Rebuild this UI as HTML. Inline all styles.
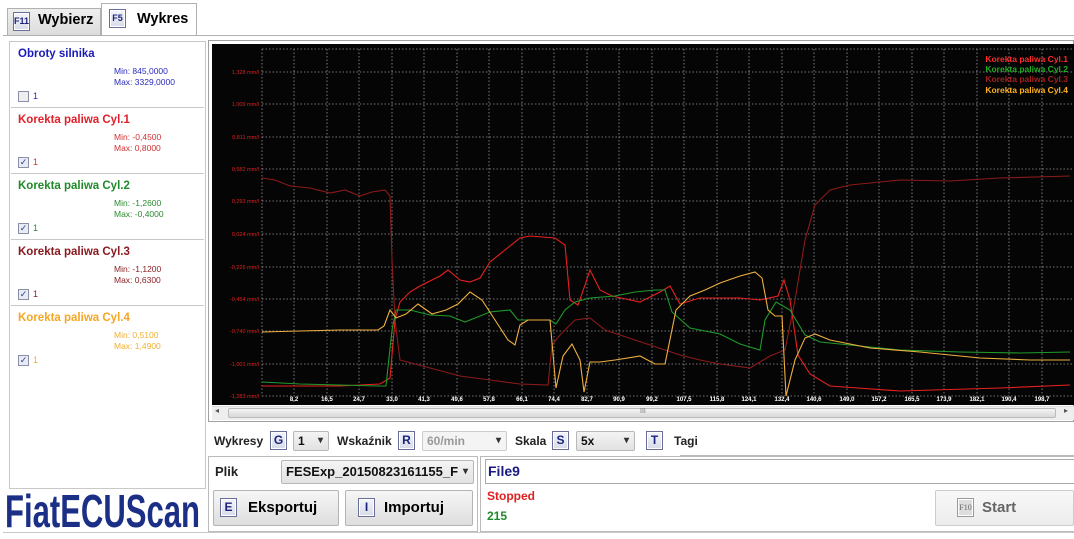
<!DOCTYPE html>
<html><head><meta charset="utf-8">
<style>
*{box-sizing:border-box;margin:0;padding:0}
body{width:1074px;height:539px;background:#fff;font-family:"Liberation Sans",sans-serif;position:relative;overflow:hidden}
.abs{position:absolute}
.key{position:absolute;width:17px;height:19px;border:1px solid #6a6f9a;background:linear-gradient(#f4f5fb,#d8dbe8);color:#1a237e;font-weight:bold;font-size:12px;text-align:center;line-height:17px;box-shadow:inset 0 0 0 1px #fff}
.item{position:absolute;left:11px;width:193px;height:66px;border-bottom:1px solid #c8c8c8;font-size:11px}
.item .t{position:absolute;left:7px;top:6px;font-weight:bold;font-size:11.5px}
.item .mn{position:absolute;left:103px;top:24px;font-size:8.5px;line-height:11px}
.item .cb{position:absolute;left:7px;top:49px;width:11px;height:11px;border:1px solid #8a8fa8;background:#e8ebf4;font-size:9px;line-height:9px;color:#2a3a8a;text-align:center}
.item .one{position:absolute;left:22px;top:49px;font-size:9px}
.lbl{font-weight:bold;font-size:12px;color:#222;position:absolute}
.btn{position:absolute;border:1px solid #b4b4b4;border-radius:2px;background:linear-gradient(#f6f6f6,#dedede);font-weight:bold;font-size:15px;color:#111}
.sel{position:absolute;border:1px solid #b8b8b8;border-radius:2px;background:linear-gradient(#f4f4f4,#e2e2e2);font-weight:bold;font-size:12px;color:#111;padding-left:4px;line-height:18px}
.sel:after{content:"▾";position:absolute;right:5px;top:0;font-size:10px;color:#333}
</style></head><body>
<div class="abs" style="left:7px;top:8px;width:94px;height:27px;background:linear-gradient(#efefef,#dcdcdc);border:1px solid #b0b0b0;border-bottom:none"></div>
<div class="key" style="left:13px;top:12px;font-size:9px">F11</div>
<div class="abs" style="left:38px;top:12px;font-weight:bold;font-size:14.5px">Wybierz</div>
<div class="abs" style="left:101px;top:3px;width:96px;height:33px;background:#fff;border:1px solid #b0b0b0;border-bottom:none"></div>
<div class="key" style="left:109px;top:9px;font-size:9px">F5</div>
<div class="abs" style="left:137px;top:11px;font-weight:bold;font-size:14.5px">Wykres</div>
<div class="abs" style="left:3px;top:35px;width:1071px;height:1px;background:#b0b0b0"></div>
<div class="abs" style="left:9px;top:41px;width:197px;height:448px;border:1px solid #c8c8c8"></div>
<div class="item" style="top:42px"><div class="t" style="color:#1a1ab8">Obroty silnika</div><div class="mn" style="color:#2a2ac0">Min: 845,0000<br>Max: 3329,0000</div><div class="cb" style="background:#eee"></div><div class="one" style="color:#2a2ac0">1</div></div>
<div class="item" style="top:108px"><div class="t" style="color:#e0202a">Korekta paliwa Cyl.1</div><div class="mn" style="color:#d03030">Min: -0,4500<br>Max: 0,8000</div><div class="cb">✓</div><div class="one" style="color:#d03030">1</div></div>
<div class="item" style="top:174px"><div class="t" style="color:#1f8a2a">Korekta paliwa Cyl.2</div><div class="mn" style="color:#2a8a30">Min: -1,2600<br>Max: -0,4000</div><div class="cb">✓</div><div class="one" style="color:#2a8a30">1</div></div>
<div class="item" style="top:240px"><div class="t" style="color:#8a1a20">Korekta paliwa Cyl.3</div><div class="mn" style="color:#8a2025">Min: -1,1200<br>Max: 0,6300</div><div class="cb">✓</div><div class="one" style="color:#8a2025">1</div></div>
<div class="item" style="top:306px;border-bottom:none"><div class="t" style="color:#f5a623">Korekta paliwa Cyl.4</div><div class="mn" style="color:#f0b030">Min: 0,5100<br>Max: 1,4900</div><div class="cb">✓</div><div class="one" style="color:#f0b030">1</div></div>
<svg class="abs" style="left:0;top:488px" width="208" height="44"><text x="5" y="39" textLength="195" lengthAdjust="spacingAndGlyphs" font-family="Liberation Sans" font-weight="bold" font-size="46" fill="#1c2f86">FiatECUScan</text></svg>
<div class="abs" style="left:3px;top:532px;width:1071px;height:1px;background:#c8c8c8"></div>
<div class="abs" style="left:208px;top:40px;width:866px;height:382px;border:1px solid #a0a0a0;background:#fff"></div>
<svg class="abs" style="left:212px;top:44px" width="862" height="361" viewBox="212 44 862 361">
<rect x="212" y="44" width="862" height="361" fill="#050505"/>
<g stroke="#999" stroke-width="0.8" stroke-dasharray="1.5,2" fill="none">
<path d="M262 49V396M294 49V396M327 49V396M359 49V396M392 49V396M424 49V396M457 49V396M489 49V396M522 49V396M554 49V396M587 49V396M619 49V396M652 49V396M684 49V396M717 49V396M749 49V396M782 49V396M814 49V396M847 49V396M879 49V396M912 49V396M944 49V396M977 49V396M1009 49V396M1042 49V396"/>
<path d="M262 49H1074M262 72H1074M262 104H1074M262 137H1074M262 169H1074M262 201H1074M262 234H1074M262 267H1074M262 299H1074M262 331H1074M262 364H1074M262 396H1074"/>
</g>
<g fill="#e02020" font-size="5.5" text-anchor="end" font-family="Liberation Sans">
<text x="259" y="74">1,328 mm/l</text><text x="259" y="106">1,009 mm/l</text><text x="259" y="139">0,811 mm/l</text><text x="259" y="171">0,582 mm/l</text><text x="259" y="203">0,293 mm/l</text><text x="259" y="236">0,024 mm/l</text><text x="259" y="269">-0,226 mm/l</text><text x="259" y="301">-0,454 mm/l</text><text x="259" y="333">-0,740 mm/l</text><text x="259" y="366">-1,001 mm/l</text><text x="259" y="398">-1,283 mm/l</text>
</g>
<g fill="#fff" font-size="6" font-weight="bold" text-anchor="middle" font-family="Liberation Sans">
<text x="294" y="401">8,2</text><text x="327" y="401">16,5</text><text x="359" y="401">24,7</text><text x="392" y="401">33,0</text><text x="424" y="401">41,3</text><text x="457" y="401">49,6</text><text x="489" y="401">57,8</text><text x="522" y="401">66,1</text><text x="554" y="401">74,4</text><text x="587" y="401">82,7</text><text x="619" y="401">90,9</text><text x="652" y="401">99,2</text><text x="684" y="401">107,5</text><text x="717" y="401">115,8</text><text x="749" y="401">124,1</text><text x="782" y="401">132,4</text><text x="814" y="401">140,6</text><text x="847" y="401">149,0</text><text x="879" y="401">157,2</text><text x="912" y="401">165,5</text><text x="944" y="401">173,9</text><text x="977" y="401">182,1</text><text x="1009" y="401">190,4</text><text x="1042" y="401">198,7</text>
</g>
<g fill="none" stroke-width="1.1">
<polyline stroke="#8b1a1a" points="262,178 275,180 290,186 310,188 330,193 345,190 360,196 372,192 385,190 390,196 392,260 395,320 400,360 430,368 460,376 490,380 520,384 548,385 552,345 560,335 575,320 590,318 605,330 620,335 650,345 680,355 700,360 720,364 750,368 770,356 785,350 795,300 805,240 815,205 830,190 850,185 900,180 950,181 1000,178 1070,176"/>
<polyline stroke="#e82020" points="262,386 300,386 340,386 380,384 390,378 395,320 400,302 410,292 420,286 440,276 448,270 460,280 470,282 480,278 490,262 505,250 520,238 530,236 555,238 565,245 570,300 578,305 585,285 590,270 600,290 612,296 640,302 660,292 670,286 680,304 700,298 740,298 760,300 778,296 784,280 790,300 798,355 810,374 830,386 900,391 1000,388 1070,385"/>
<polyline stroke="#1f9a2a" points="262,382 300,384 340,385 378,386 386,386 392,330 396,310 410,310 430,315 450,316 465,322 475,318 490,312 510,310 518,320 550,320 556,324 565,310 575,302 590,298 615,296 635,292 655,290 665,290 672,312 690,328 720,334 740,344 760,350 765,320 776,302 790,310 805,335 820,342 860,346 900,350 960,352 1020,353 1070,352"/>
<polyline stroke="#f0b040" points="262,332 300,331 340,330 378,330 384,326 390,310 396,318 406,314 418,304 432,314 446,310 458,304 470,292 482,300 495,320 508,340 515,345 520,325 528,320 550,320 556,388 563,356 572,344 580,360 584,392 590,362 600,362 615,360 640,356 655,364 665,364 676,310 690,296 705,290 720,283 740,276 755,272 762,278 768,310 775,316 782,316 786,396 795,360 805,338 815,334 830,340 870,348 920,352 980,358 1030,360 1070,360"/>
</g>
<g font-size="8.5" font-weight="bold" text-anchor="end" font-family="Liberation Sans">
<text x="1068" y="62" fill="#ff2a2a">Korekta paliwa Cyl.1</text>
<text x="1068" y="72" fill="#22aa22">Korekta paliwa Cyl.2</text>
<text x="1068" y="82" fill="#a02020">Korekta paliwa Cyl.3</text>
<text x="1068" y="93" fill="#ffb020">Korekta paliwa Cyl.4</text>
</g>
</svg>
<div class="abs" style="left:212px;top:406px;width:862px;height:14px;background:#eee;border-top:1px solid #ddd"></div>
<div class="abs" style="left:228px;top:408px;width:828px;height:10px;background:linear-gradient(#f4f4f4,#d8d8d8);border:1px solid #bbb;border-radius:2px"></div>
<div class="abs" style="left:215px;top:406px;font-size:8px;color:#555">◂</div>
<div class="abs" style="left:1064px;top:406px;font-size:8px;color:#555">▸</div>
<div class="abs" style="left:640px;top:408px;font-size:7px;color:#777">III</div>
<div class="lbl" style="left:214px;top:434px">Wykresy</div>
<div class="key" style="left:270px;top:431px">G</div>
<div class="sel" style="left:293px;top:431px;width:36px;height:20px">1</div>
<div class="lbl" style="left:337px;top:434px">Wskaźnik</div>
<div class="key" style="left:398px;top:431px">R</div>
<div class="sel" style="left:422px;top:431px;width:85px;height:20px;color:#999;background:#f4f4f4;border-color:#ccc">60/min</div>
<div class="lbl" style="left:515px;top:434px">Skala</div>
<div class="key" style="left:552px;top:431px">S</div>
<div class="sel" style="left:576px;top:431px;width:59px;height:20px">5x</div>
<div class="key" style="left:646px;top:431px">T</div>
<div class="lbl" style="left:674px;top:434px">Tagi</div>
<div class="abs" style="left:680px;top:455px;width:394px;height:1px;background:#bbb"></div>
<div class="abs" style="left:208px;top:456px;width:270px;height:76px;border:1px solid #bbb"></div>
<div class="abs" style="left:215px;top:464px;font-weight:bold;font-size:13px;color:#222">Plik</div>
<div class="sel" style="left:281px;top:460px;width:193px;height:24px;font-size:13px;line-height:22px">FESExp_20150823161155_F</div>
<div class="btn" style="left:213px;top:490px;width:126px;height:36px"></div>
<div class="key" style="left:220px;top:498px">E</div>
<div class="abs" style="left:248px;top:499px;font-weight:bold;font-size:15px">Eksportuj</div>
<div class="btn" style="left:345px;top:490px;width:128px;height:36px"></div>
<div class="key" style="left:358px;top:498px">I</div>
<div class="abs" style="left:384px;top:499px;font-weight:bold;font-size:15px">Importuj</div>
<div class="abs" style="left:480px;top:456px;width:594px;height:76px;border:1px solid #bbb;border-right:none"></div>
<div class="abs" style="left:485px;top:459px;width:589px;height:25px;border:1px solid #aaa;border-right:none"></div>
<div class="abs" style="left:488px;top:463px;font-weight:bold;font-size:14px;color:#1a1a80">File9</div>
<div class="abs" style="left:487px;top:489px;font-weight:bold;font-size:12px;color:#e02020">Stopped</div>
<div class="abs" style="left:487px;top:509px;font-weight:bold;font-size:12px;color:#1f8a2a">215</div>
<div class="btn" style="left:935px;top:490px;width:139px;height:36px;background:linear-gradient(#f8f8f8,#ececec);border-color:#ccc"></div>
<div class="key" style="left:957px;top:498px;font-size:8px;color:#666;border-color:#999;background:#ddd;font-weight:normal;font-family:'Liberation Serif',serif">F10</div>
<div class="abs" style="left:982px;top:499px;font-weight:bold;font-size:15px;color:#666">Start</div>
</body></html>
